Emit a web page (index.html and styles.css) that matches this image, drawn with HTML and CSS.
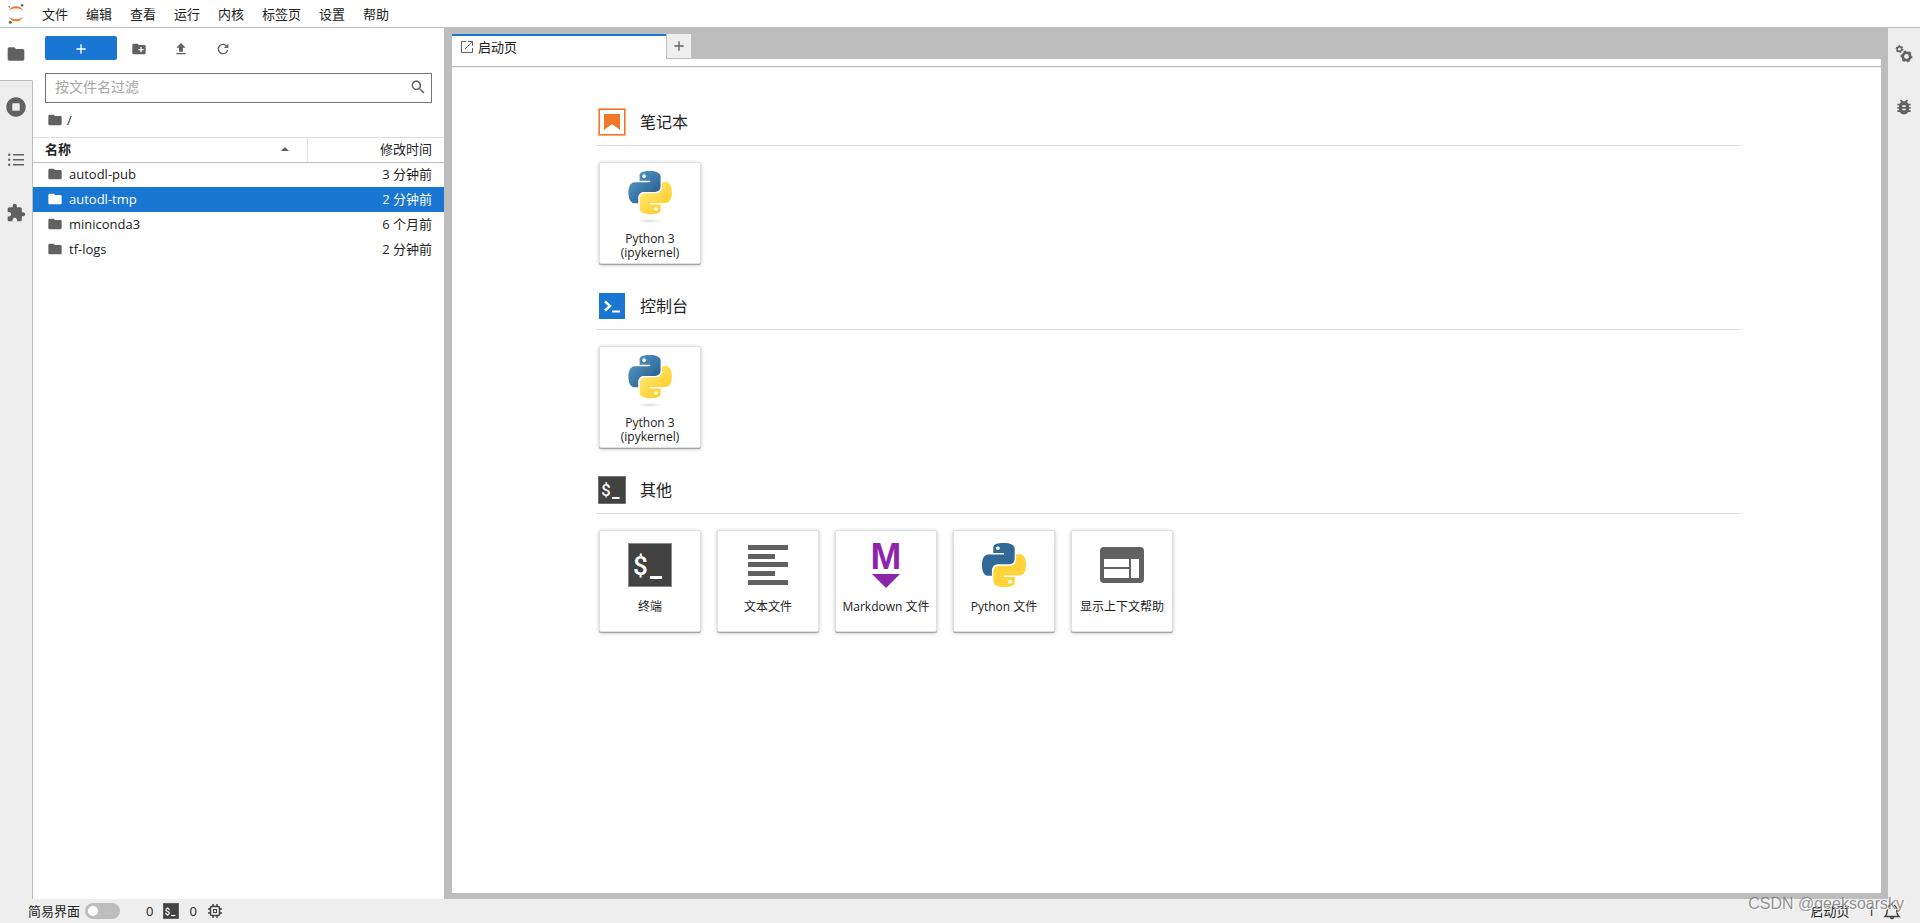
FILE: index.html
```html
<!DOCTYPE html>
<html lang="zh-CN">
<head>
<meta charset="utf-8">
<title>JupyterLab</title>
<link rel="stylesheet" href="styles.css">
</head>
<body>
<svg class="defs" aria-hidden="true">
  <defs>
    <linearGradient id="blue" x1="0" y1="0" x2="1" y2="1"><stop offset="0.1" stop-color="#5399cc"/><stop offset="0.8" stop-color="#2b628f"/></linearGradient>
    <linearGradient id="yellow" x1="0" y1="0" x2="1" y2="1"><stop offset="0.15" stop-color="#ffe873"/><stop offset="0.75" stop-color="#ffd030"/></linearGradient>
    <radialGradient id="shade"><stop offset="0" stop-color="#999" stop-opacity="0.35"/><stop offset="1" stop-color="#999" stop-opacity="0"/></radialGradient>
    <path id="py-top" d="M14.25.18l.9.2.73.26.59.3.45.32.34.34.25.34.16.33.1.3.04.26.02.2-.01.13V8.5l-.05.63-.13.55-.21.46-.26.38-.3.31-.33.25-.35.19-.35.14-.33.1-.3.07-.26.04-.21.02H8.77l-.69.05-.59.14-.5.22-.41.27-.33.32-.27.35-.2.36-.15.37-.1.35-.07.32-.04.27-.02.21v3.06H3.17l-.21-.03-.28-.07-.32-.12-.35-.18-.36-.26-.36-.36-.35-.46-.32-.59-.28-.73-.21-.88-.14-1.05-.05-1.23.06-1.22.16-1.04.24-.87.32-.71.36-.57.4-.44.42-.33.42-.24.4-.16.36-.1.32-.05.24-.01h.16l.06.01h8.16v-.83H6.18l-.01-2.75-.02-.37.05-.34.11-.31.17-.28.25-.26.31-.23.38-.2.44-.18.51-.15.58-.12.64-.1.71-.06.77-.04.84-.02 1.27.05zm-6.3 1.98l-.23.33-.08.41.08.41.23.34.33.22.41.09.41-.09.33-.22.23-.34.08-.41-.08-.41-.23-.33-.33-.22-.41-.09-.41.09z"/>
    <path id="py-bottom" d="M21.04 6.11l.28.06.32.12.35.18.36.27.36.35.35.47.32.59.28.73.21.88.14 1.04.05 1.23-.06 1.23-.16 1.04-.24.86-.32.71-.36.57-.4.45-.42.33-.42.24-.4.16-.36.09-.32.05-.24.02-.16-.01h-8.22v.82h5.84l.01 2.76.02.36-.05.34-.11.31-.17.29-.25.25-.31.24-.38.2-.44.17-.51.15-.58.13-.64.09-.71.07-.77.04-.84.01-1.27-.04-1.07-.14-.9-.2-.73-.25-.59-.3-.45-.33-.34-.34-.25-.34-.16-.33-.1-.3-.04-.25-.02-.2.01-.13v-5.34l.05-.64.13-.54.21-.46.26-.38.3-.32.33-.24.35-.2.35-.14.33-.1.3-.06.26-.04.21-.02.13-.01h5.84l.69-.05.59-.14.5-.21.41-.28.33-.32.27-.35.2-.36.15-.36.1-.35.07-.32.04-.28.02-.21V6.07h2.09l.14.01zm-6.47 14.25l-.23.33-.08.41.08.41.23.33.33.23.41.08.41-.08.33-.23.23-.33.08-.41-.08-.41-.23-.33-.33-.23-.41-.08-.41.08z"/>
    <symbol id="folder" viewBox="0 0 24 24"><path d="M10 4H4c-1.1 0-1.99.9-1.99 2L2 18c0 1.1.9 2 2 2h16c1.1 0 2-.9 2-2V8c0-1.1-.9-2-2-2h-8l-2-2z"/></symbol>
    <symbol id="terminal" viewBox="0 0 44 44"><rect width="44" height="44" fill="#8a8a8a"/><rect x="1" y="1" width="42" height="42" fill="#424242"/><text x="5" y="32" class="term-text">$</text><rect x="22" y="33" width="12" height="3" fill="#fff"/></symbol>
    <symbol id="kernel" viewBox="0 0 44 52"><g transform="translate(.5 0) scale(1.8)"><use href="#py-top" fill="url(#blue)"/><use href="#py-bottom" fill="url(#yellow)"/></g><ellipse cx="22" cy="50" rx="13" ry="2" fill="url(#shade)"/></symbol>
  </defs>
</svg>

<header class="menubar">
  <svg class="logo" viewBox="0 0 16 20"><path fill="#f37726" d="M8 15.2c-3.1 0-5.9-1.1-7.300-2.900a7.800 7.800 0 0 0 14.600 0C13.900 14.100 11.100 15.200 8 15.200zM8 4.300c3.100 0 5.900 1.100 7.300 2.900A7.800 7.800 0 0 0 .7 7.200C2.100 5.400 4.900 4.300 8 4.300z"/><circle cx="14.100" cy="1.300" r="1.200" fill="#616161"/><circle cx="2.300" cy="18.300" r="1.500" fill="#616161"/><circle cx="1.300" cy="2.800" r=".8" fill="#616161"/></svg>
  <nav class="menus">
    <button>文件</button><button>编辑</button><button>查看</button><button>运行</button><button>内核</button><button>标签页</button><button>设置</button><button>帮助</button>
  </nav>
</header>

<div class="workspace">
  <nav class="rail rail-left">
    <button class="rail-tab active" aria-label="文件浏览器"><svg width="20" height="20" class="ic"><use href="#folder"/></svg></button>
    <button class="rail-tab" aria-label="运行终端和内核"><svg width="20" height="20" class="ic" viewBox="0 0 512 512"><path d="M256 8C119 8 8 119 8 256s111 248 248 248 248-111 248-248S393 8 256 8zm96 328c0 8.800-7.200 16-16 16H176c-8.800 0-16-7.200-16-16V176c0-8.800 7.200-16 16-16h160c8.800 0 16 7.200 16 16v160z"/></svg></button>
    <button class="rail-tab" aria-label="目录"><svg width="20" height="20" class="ic" viewBox="0 0 20 20"><path d="M7 4h11v1.500H7zM7 9h11v1.500H7zM7 14h11v1.500H7z"/><circle cx="3.200" cy="4.800" r="1.200"/><circle cx="3.200" cy="9.800" r="1.200"/><circle cx="3.200" cy="14.800" r="1.200"/></svg></button>
    <button class="rail-tab" aria-label="扩展"><svg width="20" height="20" class="ic" viewBox="0 0 24 24"><path d="M20.500 11H19V7c0-1.100-.9-2-2-2h-4V3.500C13 2.120 11.880 1 10.500 1S8 2.120 8 3.500V5H4c-1.100 0-1.990.9-1.990 2v3.800H3.500c1.490 0 2.700 1.210 2.700 2.700s-1.210 2.700-2.700 2.700H2V20c0 1.100.9 2 2 2h3.800v-1.500c0-1.490 1.210-2.700 2.700-2.700 1.490 0 2.700 1.210 2.700 2.700V22H17c1.100 0 2-.9 2-2v-4h1.500c1.380 0 2.500-1.120 2.500-2.500S21.880 11 20.500 11z"/></svg></button>
  </nav>

  <aside class="browser">
    <div class="toolbar">
      <button class="new" aria-label="新建启动页"><svg width="16" height="16" viewBox="0 0 24 24"><path fill="#fff" d="M19 13h-6v6h-2v-6H5v-2h6V5h2v6h6v2z"/></svg></button>
      <button class="tool" aria-label="新建文件夹"><svg width="16" height="16" class="ic" viewBox="0 0 24 24"><path d="M20 6h-8l-2-2H4c-1.110 0-1.990.89-1.990 2L2 18c0 1.110.89 2 2 2h16c1.110 0 2-.89 2-2V8c0-1.110-.89-2-2-2zm-1 8h-3v3h-2v-3h-3v-2h3V9h2v3h3v2z"/></svg></button>
      <button class="tool" aria-label="上传文件"><svg width="16" height="16" class="ic" viewBox="0 0 24 24"><path d="M9 16h6v-6h4l-7-7-7 7h4zm-4 2h14v2H5z"/></svg></button>
      <button class="tool" aria-label="刷新"><svg width="16" height="16" class="ic" viewBox="0 0 18 18"><path d="M9 13.500c-2.490 0-4.500-2.010-4.500-4.500S6.510 4.500 9 4.500c1.240 0 2.360.52 3.170 1.330L10 8h5V3l-1.760 1.760C12.150 3.680 10.660 3 9 3 5.690 3 3.010 5.690 3.010 9S5.690 15 9 15c2.970 0 5.430-2.160 5.900-5h-1.520c-.46 2-2.240 3.500-4.380 3.500z"/></svg></button>
    </div>
    <label class="filter">
      <input type="text" placeholder="按文件名过滤" aria-label="按文件名过滤">
      <svg width="16" height="16" class="ic" viewBox="0 0 18 18"><path d="M12.100 10.900h-.7l-.2-.2c.8-.9 1.300-2.200 1.300-3.500 0-3-2.400-5.400-5.400-5.400S1.800 4.200 1.800 7.100s2.400 5.400 5.400 5.400c1.300 0 2.500-.5 3.500-1.300l.2.200v.7l4.100 4.100 1.200-1.200-4.100-4.100zm-5 0c-2.100 0-3.700-1.700-3.700-3.700s1.700-3.700 3.700-3.700 3.700 1.700 3.700 3.700-1.600 3.700-3.700 3.700z"/></svg>
    </label>
    <div class="crumbs"><svg width="16" height="16" class="ic"><use href="#folder"/></svg><span>/</span></div>
    <table class="files">
      <thead><tr><th class="name"><span class="sort">名称<svg width="8" height="4" class="ic" viewBox="0 0 8 4"><path d="M0 4l4-4 4 4z"/></svg></span></th><th class="time">修改时间</th></tr></thead>
      <tbody>
        <tr><td class="name"><span class="file"><svg width="16" height="16" class="ic"><use href="#folder"/></svg>autodl-pub</span></td><td class="time">3 分钟前</td></tr>
        <tr class="selected"><td class="name"><span class="file"><svg width="16" height="16" class="ic"><use href="#folder"/></svg>autodl-tmp</span></td><td class="time">2 分钟前</td></tr>
        <tr><td class="name"><span class="file"><svg width="16" height="16" class="ic"><use href="#folder"/></svg>miniconda3</span></td><td class="time">6 个月前</td></tr>
        <tr><td class="name"><span class="file"><svg width="16" height="16" class="ic"><use href="#folder"/></svg>tf-logs</span></td><td class="time">2 分钟前</td></tr>
      </tbody>
    </table>
  </aside>

  <main class="dock">
    <div class="tabs">
      <button class="tab"><svg width="12" height="12" viewBox="0 0 12 12" fill="none" stroke="#616161"><path d="M5 .500H.5v11h11V7M7 .500h4.500V5M11.500 .500L4 8"/></svg>启动页</button>
      <button class="add" aria-label="添加标签页"><svg width="16" height="16" class="ic" viewBox="0 0 24 24"><path d="M19 13h-6v6h-2v-6H5v-2h6V5h2v6h6v2z"/></svg></button>
    </div>
    <div class="strip"></div>
    <div class="launcher">
      <section>
        <h2><svg width="28" height="28" viewBox="0 0 28 28"><rect x=".5" y=".5" width="27" height="27" fill="#fff" stroke="#f8ac7b"/><rect x="1.500" y="1.500" width="25" height="25" fill="none" stroke="#f37726"/><path fill="#f37726" d="M6 6h16v16l-8-6-8 6z"/></svg>笔记本</h2>
        <div class="cards">
          <button class="card"><svg width="44" height="52"><use href="#kernel"/></svg><span>Python 3<br>(ipykernel)</span></button>
        </div>
      </section>
      <section>
        <h2><svg width="28" height="28" viewBox="0 0 28 28"><rect x="1" y="1" width="26" height="26" fill="#1976d2"/><path d="M7 9.500l5 4.500-5 4.500" fill="none" stroke="#fff" stroke-width="2.500"/><path d="M14 19.500h8" stroke="#fff" stroke-width="2"/></svg>控制台</h2>
        <div class="cards">
          <button class="card"><svg width="44" height="52"><use href="#kernel"/></svg><span>Python 3<br>(ipykernel)</span></button>
        </div>
      </section>
      <section>
        <h2><svg width="28" height="28"><use href="#terminal"/></svg>其他</h2>
        <div class="cards">
          <button class="card"><svg width="44" height="52" viewBox="0 -4 44 52"><use href="#terminal" width="44" height="44"/></svg><span>终端</span></button>
          <button class="card"><svg width="44" height="52" viewBox="0 -4 44 52" class="ic"><path d="M2 2h40v5H2zM2 11h27v5H2zM2 19h40v5H2zM2 28h27v5H2zM2 37h40v5H2z"/></svg><span>文本文件</span></button>
          <button class="card"><svg width="44" height="52" viewBox="0 -4 44 52" fill="#8e24aa" class="md"><text x="22" y="26" class="md-text">M</text><path d="M8 31h28L22 45z"/></svg><span>Markdown 文件</span></button>
          <button class="card"><svg width="44" height="52" viewBox="0 -4 44 52"><g transform="scale(1.8333)"><use href="#py-top" fill="#306998"/><use href="#py-bottom" fill="#ffd43b"/></g></svg><span>Python 文件</span></button>
          <button class="card"><svg width="44" height="52" viewBox="0 -4 44 52" class="ic"><path fill-rule="evenodd" d="M4 4h36a4 4 0 0 1 4 4v28a4 4 0 0 1-4 4H4a4 4 0 0 1-4-4V8a4 4 0 0 1 4-4zM4 16v8h25v-8zM4 26v9h25v-9zM31 16v19h8V16z"/></svg><span>显示上下文帮助</span></button>
        </div>
      </section>
    </div>
  </main>

  <nav class="rail rail-right">
    <button class="rail-tab" aria-label="属性检查器"><svg width="20" height="20" viewBox="0 0 20 20" fill="none" stroke="#616161"><circle cx="5.500" cy="5" r="2.300" stroke-width="1.600"/><circle cx="5.500" cy="5" r="3.300" stroke-width="1.200" stroke-dasharray="1.730 1.730"/><circle cx="12.500" cy="12.500" r="3.700" stroke-width="2.600"/><circle cx="12.500" cy="12.500" r="5.200" stroke-width="1.500" stroke-dasharray="2.720 2.720" stroke-dashoffset="1"/></svg></button>
    <button class="rail-tab" aria-label="调试器"><svg width="20" height="20" class="ic" viewBox="0 0 24 24"><path d="M20 8h-2.810c-.45-.78-1.070-1.450-1.820-1.960L17 4.410 15.590 3l-2.170 2.170C12.960 5.060 12.490 5 12 5c-.49 0-.96.06-1.410.17L8.410 3 7 4.410l1.620 1.630C7.880 6.550 7.260 7.220 6.810 8H4v2h2.090c-.05.33-.09.66-.09 1v1H4v2h2v1c0 .34.04.67.09 1H4v2h2.810c1.040 1.790 2.970 3 5.190 3s4.150-1.210 5.190-3H20v-2h-2.090c.05-.33.09-.66.09-1v-1h2v-2h-2v-1c0-.34-.04-.67-.09-1H20V8zm-6 8h-4v-2h4v2zm0-4h-4v-2h4v2z"/></svg></button>
  </nav>
</div>

<footer class="status">
  <label class="simple">简易界面<input type="checkbox" role="switch"></label>
  <button class="sessions"><span>0</span><svg width="16" height="16"><use href="#terminal"/></svg><span>0</span><svg width="16" height="16" viewBox="0 0 16 16" fill="none" stroke="#424242"><rect x="3.500" y="3.500" width="9" height="9" rx="1" stroke-width="1.500"/><rect x="6.500" y="6.500" width="3" height="3"/><path d="M6 1v2M10 1v2M6 13v2M10 13v2M1 6h2M1 10h2M13 6h2M13 10h2" stroke-width="1.500"/></svg></button>
  <span class="current">启动页</span>
  <button class="notices"><span>1</span><svg width="18" height="18" viewBox="0 0 18 18" fill="none" stroke="#424242" stroke-width="1.400"><path d="M2 14.500c2-1.500 2-3 2.200-6C4.400 5 6 3 9 3s4.600 2 4.800 5.500c.2 3 .2 4.500 2.200 6zM9 3V1M7.500 15a1.500 1.500 0 0 0 3 0"/></svg></button>
  <span class="watermark">CSDN @geeksoarsky</span>
</footer>
</body>
</html>
```

FILE: styles.css
```css
* { box-sizing: border-box; }

body {
  margin: 0;
  height: 100vh;
  display: flex;
  flex-direction: column;
  overflow: hidden;
  background: #eee;
  color: #212121;
  font: 13px/24px "Open Sans", "Noto Sans CJK SC", sans-serif;
}

button, input {
  margin: 0;
  padding: 0;
  border: 0;
  background: none;
  color: inherit;
  font: inherit;
}

svg { display: block; flex: none; }
.defs { position: absolute; width: 0; height: 0; }
.ic { fill: #616161; }

.term-text { font: 500 26px Roboto, sans-serif; fill: #fff; }
.md { overflow: visible; }
.md-text { font: bold 37px "Liberation Sans", sans-serif; text-anchor: middle; }

.menubar {
  display: flex;
  align-items: center;
  height: 28px;
  background: #fff;
  border-bottom: 1px solid #bdbdbd;
}
.logo { width: 16px; height: 20px; margin: 0 9px 0 8px; }
.menus { display: flex; }
.menus button { padding: 0 9px; line-height: 26px; }

.workspace { flex: 1; display: flex; min-height: 0; }

.rail { display: flex; flex-direction: column; background: #eee; }
.rail-left { width: 33px; }
.rail-right { width: 32px; }
.rail-tab {
  display: flex;
  align-items: center;
  justify-content: center;
  height: 53px;
  padding-bottom: 2px;
}
.rail-right .rail-tab { padding-right: 1px; }
.rail-left .rail-tab { border-right: 1px solid #bdbdbd; }
.rail-left::after { content: ""; flex: 1; border-right: 1px solid #bdbdbd; }
.rail-left .active {
  padding-bottom: 0;
  background: #fff;
  border-right-color: #fff;
  border-bottom: 1px solid #bdbdbd;
}

.browser { width: 411px; background: #fff; }
.toolbar { display: flex; gap: 10px; padding: 8px 12px 13px; }
.new {
  display: flex;
  align-items: center;
  justify-content: center;
  width: 72px;
  height: 24px;
  margin-right: -4px;
  border-radius: 2px;
  background: #1976d2;
}
.new, .tool { padding-top: 2px; }
.tool {
  display: flex;
  align-items: center;
  justify-content: center;
  width: 32px;
  height: 24px;
}
.filter {
  display: flex;
  align-items: center;
  height: 30px;
  margin: 0 12px;
  padding: 0 5px 2px 9px;
  border: 1px solid #757575;
}
.filter input { flex: 1; font-size: 14px; outline: 0; }
.filter input::placeholder { color: #a6a6a6; opacity: 1; }
.crumbs {
  display: flex;
  align-items: center;
  gap: 4px;
  height: 34px;
  padding-left: 14px;
}

.files {
  width: 100%;
  border-spacing: 0;
  border-top: 1px solid #e0e0e0;
  table-layout: fixed;
  line-height: 24px;
}
.files th {
  height: 24px;
  padding: 0 0 2px;
  line-height: 22px;
  box-shadow: 0 1px #bdbdbd;
}
.files td { height: 25px; padding: 0 0 1px; }
.files .time { width: 137px; padding-right: 12px; text-align: right; font-weight: normal; }
.files th.time { border-left: 1px solid #e0e0e0; }
.sort {
  display: flex;
  align-items: center;
  justify-content: space-between;
  padding: 0 18px 0 12px;
}
.file { display: flex; align-items: center; gap: 6px; padding-left: 14px; }
.selected { background: #1976d2; color: #fff; }
.selected .ic { fill: #fff; }

.dock {
  flex: 1;
  display: flex;
  flex-direction: column;
  padding: 6px 7px 6px 8px;
  background: #bdbdbd;
}
.tabs { display: flex; height: 25px; }
.tab {
  display: flex;
  align-items: center;
  gap: 5px;
  width: 214px;
  padding: 0 0 2px 9px;
  border-top: 2px solid #1976d2;
  background: #fff;
}
.add {
  display: flex;
  align-items: center;
  justify-content: center;
  width: 24px;
  margin-bottom: 1px;
  margin-left: 1px;
  background: #eee;
}
.strip {
  height: 8px;
  background: #fff;
  border-bottom: 1px solid #bdbdbd;
}
.launcher {
  flex: 1;
  padding: 38px 139px 0 144px;
  background: #fff;
  box-shadow: inset 0 1px 1px #eee;
}
.launcher h2 {
  display: flex;
  align-items: center;
  gap: 14px;
  height: 41px;
  margin: 0;
  padding: 0 0 7px 2px;
  border-bottom: 1px solid #e0e0e0;
  font-size: 16px;
  font-weight: normal;
}
.cards { display: flex; gap: 16px; padding: 16px 3px 25px; }
.card {
  display: flex;
  flex-direction: column;
  align-items: center;
  width: 102px;
  height: 102px;
  padding-top: 8px;
  border: 1px solid #e0e0e0;
  border-radius: 2px;
  background: #fff;
  box-shadow: 0 1px 1px rgba(0, 0, 0, 0.3), 0 1px 4px rgba(0, 0, 0, 0.2);
  font-size: 12px;
  line-height: 14px;
  white-space: nowrap;
}
.card span { margin-top: 9px; }

.status {
  position: relative;
  display: flex;
  align-items: center;
  height: 24px;
  padding: 0 19px 0 28px;
}
.simple { display: flex; align-items: center; gap: 5px; }
.simple input {
  appearance: none;
  display: flex;
  align-items: center;
  width: 35px;
  height: 16px;
  padding: 3px;
  border-radius: 8px;
  background: #bdbdbd;
}
.simple input::before {
  content: "";
  width: 10px;
  height: 10px;
  border-radius: 5px;
  background: #fff;
}
.sessions { display: flex; align-items: center; gap: 10px; margin-left: 26px; }
.current { margin-left: auto; }
.notices { display: flex; align-items: center; gap: 8px; margin-left: 18px; }
.watermark {
  position: absolute;
  right: 16px;
  bottom: 7px;
  color: rgba(110, 110, 110, 0.75);
  font: 16px/24px "Liberation Sans", sans-serif;
  text-shadow: 1px 1px #fff;
}
```
